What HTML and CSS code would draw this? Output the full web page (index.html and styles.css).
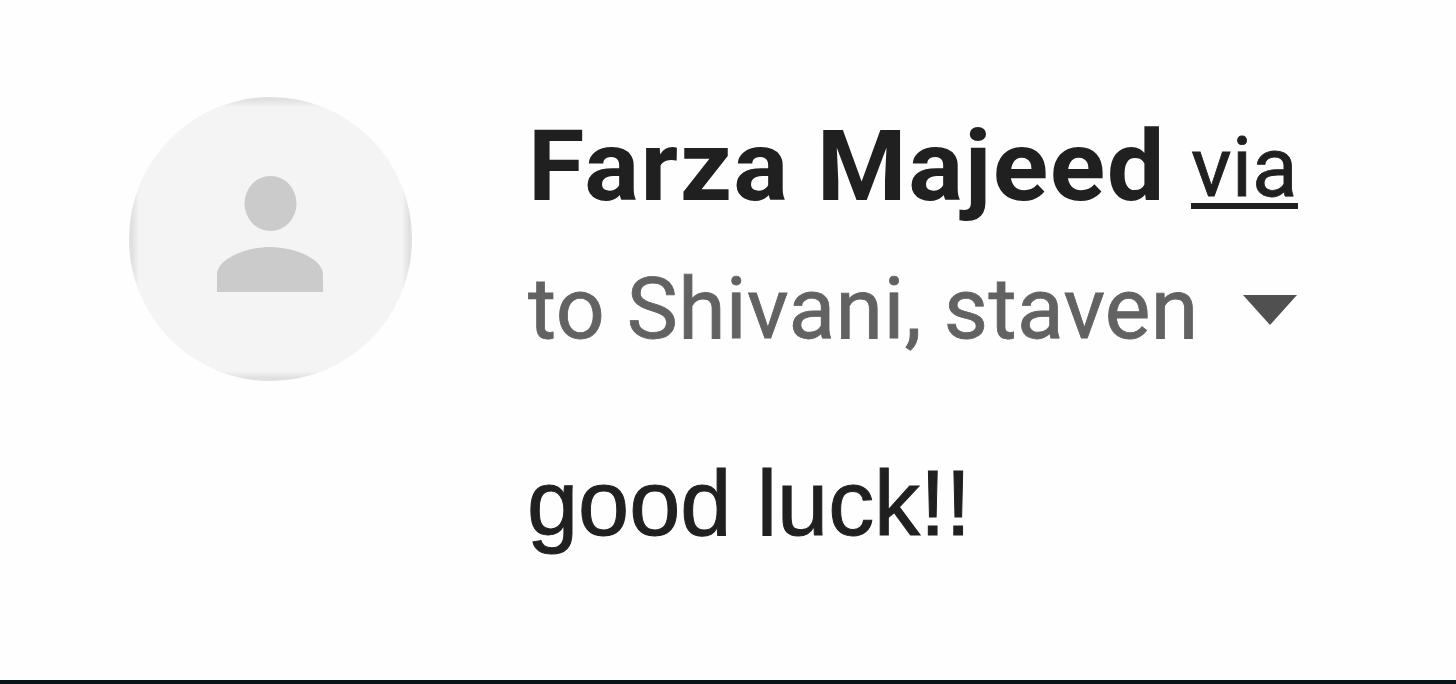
FILE: index.html
```html
<!DOCTYPE html>
<html lang="en">
<head>
  <meta charset="UTF-8" />
  <title>good luck!!</title>
  <link rel="stylesheet" href="styles.css">
</head>
<body>

  <div class="message">
    <div class="avatar">
      <svg viewBox="0 0 108 118" aria-hidden="true">
        <ellipse cx="53.500" cy="27.500" rx="26" ry="27.500"/>
        <path d="M0 116V98C0 84 27 71 53 71s53 13 53 27v18z"/>
      </svg>
    </div>

    <div class="content">
      <div class="sender">
        <span class="name">Farza Majeed</span>
        <a class="via">via</a>
      </div>
      <div class="recipients">
        <span class="to">to Shivani, staven</span>
        <svg class="arrow" viewBox="0 0 54 30" aria-hidden="true">
          <path d="M0 0h54L27 30z"/>
        </svg>
      </div>
      <p class="body">good luck!!</p>
    </div>
  </div>

</body>
</html>
```
FILE: styles.css
```css
* {
  box-sizing: border-box;
}

body {
  margin: 0;
  height: 684px;
  background: #fefefe;
  border-bottom: 4px solid #07151b;
  font-family: Roboto, sans-serif;
  color: #202020;
  overflow: hidden;
}

.message {
  display: flex;
  gap: 116px;
  padding: 97px 0 0 129px;
}

/* the frame only shows at the four sides of the circle */
.avatar {
  display: flex;
  justify-content: center;
  width: 283px;
  height: 284px;
  padding-top: 79px;
  border-radius: 50%;
  background:
    linear-gradient(to bottom, #e0e0e0 3px, transparent 10px),
    linear-gradient(to top, #e0e0e0 3px, transparent 10px),
    linear-gradient(to right, #e0e0e0 3px, transparent 10px),
    linear-gradient(to left, #e0e0e0 3px, transparent 10px),
    #f4f4f4;
}

.avatar svg {
  width: 108px;
  height: 118px;
  fill: #cbcbcb;
}

.content {
  padding-top: 10px;
  white-space: nowrap;
}

.sender {
  display: flex;
  height: 140px;
  line-height: 120px;
}

.name {
  width: 663px;
  font-size: 98px;
  font-weight: 700;
  letter-spacing: 1.4px;
  transform: scaleX(1.048);
  transform-origin: left;
}

.via {
  height: 102px;
  font-size: 84px;
  line-height: 121px;
  border-bottom: 6px solid #202020;
  -webkit-text-stroke: 0.8px #202020;
}

.recipients {
  display: flex;
  align-items: center;
  height: 122px;
  font-size: 86px;
  color: #626262;
}

.to {
  width: 715px;
  letter-spacing: 0.35px;
  -webkit-text-stroke: 0.8px #626262;
}

.arrow {
  width: 54px;
  height: 30px;
  margin-top: 4px;
  fill: #505050;
}

.body {
  margin: 74px 0 0 -1px;
  font-family: "Liberation Sans", Arial, sans-serif;
  font-size: 92px;
  line-height: 120px;
  letter-spacing: -0.1px;
  -webkit-text-stroke: 1px #202020;
}
```
